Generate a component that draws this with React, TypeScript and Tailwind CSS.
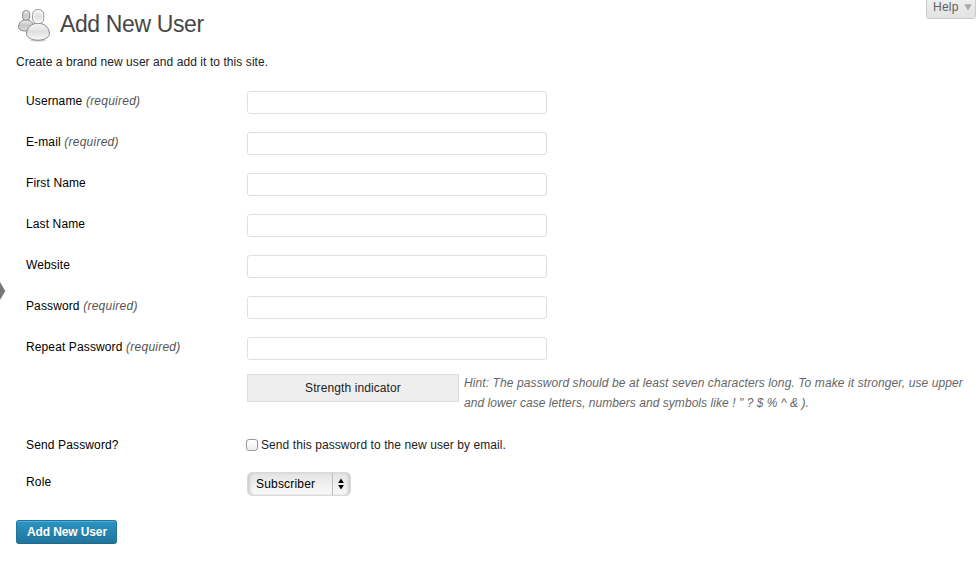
type Field = { id: string; label: string; required?: boolean; type?: string };

const fields: Field[] = [
  { id: 'user', label: 'Username', required: true },
  { id: 'email', label: 'E-mail', required: true },
  { id: 'first', label: 'First Name' },
  { id: 'last', label: 'Last Name' },
  { id: 'url', label: 'Website' },
  { id: 'pass1', label: 'Password', required: true, type: 'password' },
  { id: 'pass2', label: 'Repeat Password', required: true, type: 'password' },
];

function UsersIcon() {
  return (
    <svg width="36" height="36" viewBox="0 0 36 36" className="shrink-0">
      <defs>
        <linearGradient id="back" x1="0" y1="0" x2="0" y2="1">
          <stop offset="0" stopColor="#f0f0f0" />
          <stop offset="0.5" stopColor="#c8c8c8" />
          <stop offset="1" stopColor="#dedede" />
        </linearGradient>
        <linearGradient id="front" x1="0" y1="0" x2="0" y2="1">
          <stop offset="0" stopColor="#f8f8f8" />
          <stop offset="0.5" stopColor="#dedede" />
          <stop offset="0.6" stopColor="#e4e4e4" />
          <stop offset="1" stopColor="#fcfcfc" />
        </linearGradient>
      </defs>
      <ellipse cx="22" cy="34.500" rx="8" ry="0.900" fill="#cfcfcf" />
      <path d="M2.500 21.700C2.500 17 5.500 13.800 10 13.800S18 17 18 21.700C17 24 14 25 10 25S3.300 24 2.500 21.700Z" fill="url(#back)" stroke="#858585" />
      <rect x="6.500" y="4.500" width="7.300" height="9.800" rx="3.600" fill="url(#back)" stroke="#8c8c8c" />
      <path d="M10.500 28.300C10.500 21.500 15.400 17.300 22 17.300s11.500 4.200 11.500 11C32.700 31.700 28 34.200 22 34.200s-10.700-2.500-11.500-5.900Z" fill="url(#front)" stroke="#858585" />
      <rect x="16.700" y="3.600" width="11" height="14" rx="4.800" fill="url(#front)" stroke="#8c8c8c" />
      <rect x="17.700" y="4.600" width="9" height="12" rx="3.900" fill="none" stroke="#fff" strokeWidth="0.9" />
    </svg>
  );
}

export default function App() {
  return (
    <div className="relative h-[579px] w-[979px] overflow-hidden bg-white font-['Liberation_Sans',Arial,sans-serif] text-[12px] leading-[20px] text-[#222]">
      <svg className="absolute left-0 top-[281px]" width="6" height="20" viewBox="0 0 6 20">
        <path d="M0 1L5.300 10L0 19Z" fill="#777" />
      </svg>
      <button className="absolute left-[926px] top-[-1px] flex h-5 w-[50px] items-center gap-[5px] rounded-b-[3px] border border-[#ccc] bg-linear-to-b from-[#eee] to-[#e2e2e2] pl-1.5 text-[#606060]">
        <span className="-mt-[5px] tracking-[0.26px]">Help</span>
        <svg className="-mt-[3px]" width="8" height="7" viewBox="0 0 8 7">
          <path d="M0.300 0.300H7.700L4 6.700Z" fill="#aaa" />
        </svg>
      </button>

      <header className="flex h-[45px] items-start pl-4 pt-[6px]">
        <UsersIcon />
        <h1 className="ml-[8px] mt-px text-[23px] leading-[35px] tracking-[-0.38px] text-[#464646]">Add New User</h1>
      </header>
      <p className="mt-[7px] pl-4 tracking-[0.07px]">Create a brand new user and add it to this site.</p>

      <form className="pl-[26px] pt-[10px]" onSubmit={(e) => e.preventDefault()}>
        {fields.map((f) => (
          <div key={f.id} className="flex h-[41px] items-start pt-[9px]">
            <label htmlFor={f.id} className="w-[221px] tracking-[0.12px] text-black">
              {f.label}
              {f.required && <span className="italic tracking-[0.24px] text-[#555]"> (required)</span>}
            </label>
            <input id={f.id} type={f.type ?? 'text'} className="h-[23px] w-[300px] rounded-[3px] border border-[#dfdfdf] bg-white outline-none" />
          </div>
        ))}
        <div className="flex h-[66px] items-start pl-[221px] pt-[5px]">
          <div className="h-7 w-[212px] border border-[#ddd] bg-[#eee] text-center leading-[26px] tracking-[0.1px]">Strength indicator</div>
          <p className="-mt-px ml-[5px] whitespace-nowrap italic text-[#666]">
            <span className="tracking-[0.1px]">Hint: The password should be at least seven characters long. To make it stronger, use upper</span>
            <br />
            <span className="tracking-[0.055px]">and lower case letters, numbers and symbols like ! " ? $ % ^ &amp; ).</span>
          </p>
        </div>
        <div className="flex h-[37px] items-start">
          <span className="w-[220px] tracking-[0.14px] text-black">Send Password?</span>
          <label className="flex items-start gap-[3px] tracking-[0.08px]">
            <input type="checkbox" className="mt-[4px] h-3 w-3 appearance-none rounded-[3px] border border-[#999] bg-linear-to-b from-white to-[#eee]" />
            Send this password to the new user by email.
          </label>
        </div>
        <div className="flex h-[48px] items-start">
          <span className="w-[221px] tracking-[0.18px] text-black">Role</span>
          <button type="button" className="flex h-6 w-[104px] items-center rounded-[5px] border border-[#d9d9d9] bg-linear-to-b from-[#e4e4e4] to-[#fafafa] text-black shadow-[inset_3px_0_3px_-1px_#ccc,inset_-3px_0_3px_-1px_#ccc]">
            <span className="flex h-full w-[85px] items-center border-r border-[#bbb] pl-2 tracking-[0.18px]">Subscriber</span>
            <svg className="ml-1" width="8" height="12" viewBox="0 0 8 12">
              <path d="M4 0.500L6.900 5H1.100ZM4 11.500L6.900 7H1.100Z" fill="#000" />
            </svg>
          </button>
        </div>
        <button className="-ml-[10px] h-6 w-[101px] rounded-[3px] border border-[#21759b] border-b-[#1e6a8d] bg-linear-to-b from-[#2a95c5] to-[#21759b] pl-px text-center font-bold leading-[22px] tracking-[-0.12px] text-white shadow-[inset_0_1px_0_rgba(120,200,230,0.5)] text-shadow-[0_1px_0_rgba(0,0,0,0.15)]">Add New User</button>
      </form>
    </div>
  );
}
